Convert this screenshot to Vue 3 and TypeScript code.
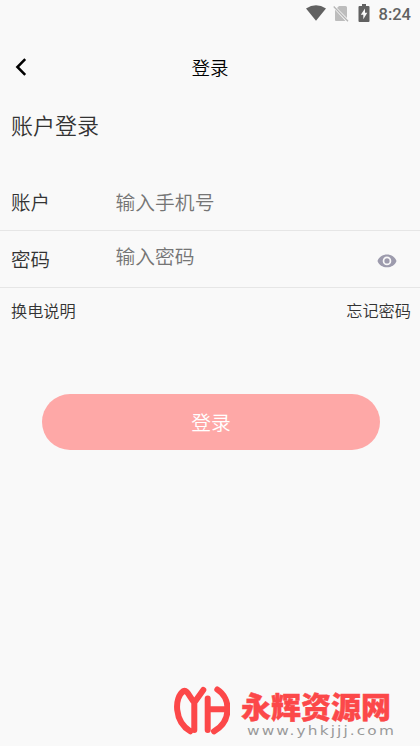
<script setup lang="ts">
import { ref } from 'vue'

const account = ref<string>('')
const password = ref<string>('')
const visible = ref<boolean>(false)
</script>

<template>
  <main class="screen">
    <div class="status">
      <svg class="wifi" viewBox="0 0 20 16"><path d="M0 3.4Q10-3 20 3.4L10 15.8Z" /></svg>
      <svg class="sim" viewBox="0 0 16 17">
        <path d="M6 1H12.5Q14 1 14 2.5V13L4 3ZM2 4.8L12.5 16H3Q2 16 2 15Z" />
        <path class="slash" d="M.7 1.5L15 16.3" />
      </svg>
      <svg class="battery" viewBox="0 0 12 18">
        <path fill-rule="evenodd" d="M4 0H8V2H10.5Q11.5 2 11.5 3V17Q11.5 18 10.5 18H1.5Q.5 18 .5 17V3Q.5 2 1.5 2H4ZM7 4.5L2.8 10.8H5.3V15.3L9.3 8.8H7Z" />
      </svg>
      <span class="time">8:24</span>
    </div>
    <header class="nav">
      <svg class="back" viewBox="0 0 12 18"><path d="M10.2 1.2L2.4 9L10.2 16.8" /></svg>
      <h1>登录</h1>
    </header>
    <h2>账户登录</h2>
    <form @submit.prevent>
      <label class="row first">
        <span class="label">账户</span>
        <input v-model="account" type="text" placeholder="输入手机号" />
      </label>
      <div class="row second">
        <span class="label">密码</span>
        <input v-model="password" :type="visible ? 'text' : 'password'" placeholder="输入密码" />
        <button class="eye" type="button" @click="visible = !visible">
          <svg viewBox="0 0 20 14">
            <path fill-rule="evenodd" d="M10 .5C5.5.5 2 3 .5 7C2 11 5.5 13.3 10 13.3S18 11 19.5 7C18 3 14.5.5 10 .5ZM10 2.6A4.3 4.3 0 1 1 10 11.2A4.3 4.3 0 1 1 10 2.6Z" />
            <circle cx="10" cy="6.9" r="2.6" />
          </svg>
        </button>
      </div>
      <div class="links"><span>换电说明</span><span>忘记密码</span></div>
      <button class="submit" type="submit">登录</button>
    </form>
    <aside class="mark">
      <svg class="logo" viewBox="0 0 56 50">
        <path d="M16.3 45.3C0 35.500 0 11.500 9.500 5C13 3.500 15 10 20.300 16.500L29.300 4M20.300 15V44" />
        <path d="M33.700 12.500V44M34 23.300H52M43.300 3.500C57.500 12.500 57.500 35.500 40 45.300" />
      </svg>
      <div class="brand">
        <span class="name">永辉资源网</span>
        <span class="url">www.yhkjjj.com</span>
      </div>
    </aside>
  </main>
</template>

<style>
body { background: #f9f9f9; }
</style>

<style scoped>
* { box-sizing: border-box; }
.screen {
  height: 746px;
  display: flex;
  flex-direction: column;
  background: #f9f9f9;
  color: #333;
  font-family: "Noto Sans CJK SC", sans-serif;
  font-weight: 350;
  overflow: hidden;
}
.status {
  height: 28px;
  flex: none;
  display: flex;
  align-items: center;
  justify-content: flex-end;
  padding-right: 9px;
  fill: #616161;
}
.wifi { width: 20px; height: 16px; margin: 0 7px 2px 0; }
.sim { width: 16px; height: 17px; margin: 0 9px 1px 0; fill: #bdbdbd; }
.slash { stroke: #b5b5b5; stroke-width: 1.3; }
.battery { width: 12px; height: 18px; margin: 0 9px 2px 0; }
.time { font: 500 16.5px/28px Roboto, sans-serif; color: #616161; padding-top: 1px; }
.nav {
  height: 78px;
  flex: none;
  display: grid;
  grid-template-columns: 40px 1fr 40px;
  align-items: center;
}
.back { width: 12px; height: 18px; margin-left: 15px; fill: none; stroke: #000; stroke-width: 2.5; }
h1 { margin: 0; font-size: 18.5px; line-height: 28px; font-weight: 350; text-align: center; color: #000; }
h2 { margin: 2px 0 0 11px; flex: none; font-size: 22px; line-height: 32px; font-weight: 350; }
form { display: flex; flex-direction: column; margin-top: 34px; }
.row { display: flex; align-items: center; height: 57px; padding-left: 11px; border-bottom: 1px solid #e6e6e6; }
.label { width: 104.5px; font-size: 19.5px; line-height: 28px; }
input {
  width: 240px;
  height: 30px;
  padding: 0;
  border: 0;
  outline: 0;
  background: transparent;
  font: 350 19.8px/30px "Noto Sans CJK SC", sans-serif;
  color: #333;
}
input::placeholder { color: #757575; opacity: 1; }
.second input { margin-bottom: 6px; }
.eye { width: 20px; height: 14px; margin: 3px 0 0 21px; padding: 0; border: 0; background: none; }
.eye svg { display: block; width: 20px; height: 14px; fill: #9d9bad; }
.links { display: flex; justify-content: space-between; padding: 10px 9px 1px 11px; font-size: 16.2px; line-height: 24px; }
.submit {
  height: 56px;
  width: 338px;
  margin: 71px 0 0 42px;
  padding: 0;
  border: 0;
  border-radius: 28px;
  background: #fea8a7;
  color: #fff;
  font: 350 19.8px/56px "Noto Sans CJK SC", sans-serif;
}
.mark { display: flex; margin: auto 0 0 174px; height: 62px; }
.logo { width: 56px; height: 50px; margin-top: 2px; fill: none; stroke: #fc4849; stroke-width: 6; stroke-linejoin: round; stroke-linecap: round; }
.brand { display: flex; flex-direction: column; align-items: flex-start; margin-left: 11px; white-space: nowrap; }
.name { height: 38px; font-size: 30px; line-height: 42px; font-weight: 900; color: #fc4849; -webkit-text-stroke: .4px #fc4849; }
.url { margin-left: 6px; font: 400 13px/17px "DejaVu Sans", sans-serif; letter-spacing: 1.8px; color: #999; transform: scaleX(1.18); transform-origin: left; }
</style>
